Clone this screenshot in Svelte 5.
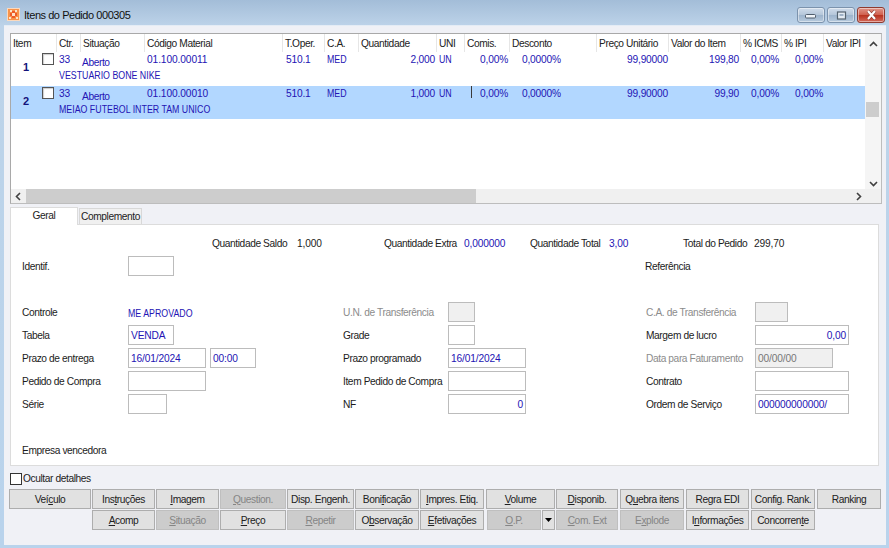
<script>
  const columns = [
    ['Item', 46], ['Ctr.', 24], ['Situação', 64], ['Código Material', 138], ['T.Oper.', 42],
    ['C.A.', 34], ['Quantidade', 78], ['UNI', 28], ['Comis.', 45], ['Desconto', 87],
    ['Preço Unitário', 72], ['Valor do Item', 72], ['% ICMS', 41], ['% IPI', 42], ['Valor IPI', 41]
  ];
  const rows = [
    { n: '1', qty: '2,000', total: '199,80', desc: 'VESTUARIO BONE NIKE', code: '01.100.00011', selected: false },
    { n: '2', qty: '1,000', total: '99,90', desc: 'MEIAO FUTEBOL INTER TAM UNICO', code: '01.100.00010', selected: true }
  ];
  const top = [
    ['', 'Veículo', 'c'], ['', 'Instruções', 't'], ['', 'Imagem', 'I'], ['off', 'Question.', 'Q'],
    ['', 'Disp. Engenh.', ''], ['', 'Bonificação', 'f'], ['wide', 'Impres. Etiq.', 'I'], ['', 'Volume', 'V'],
    ['wide', 'Disponib.', 'D'], ['wide', 'Quebra itens', 'u'], ['wide', 'Regra EDI', 'g'], ['wide', 'Config. Rank.', ''], ['', 'Ranking', '']
  ];
  const bottom = [
    ['', 'Acomp', 'A'], ['off', 'Situação', 'S'], ['', 'Preço', 'P'], ['off', 'Repetir', 'R'],
    ['', 'Observação', 'b'], ['wide', 'Efetivações', 'E']
  ];
  const bottomEnd = [
    ['off wide', 'Com. Ext', 'C'], ['off wide', 'Explode', 'x'], ['wide', 'Informações', 'n'], ['wide', 'Concorrente', 't']
  ];
  function parts(label, key) {
    if (!key) return [label, '', ''];
    const i = label.indexOf(key);
    return [label.slice(0, i), key, label.slice(i + 1)];
  }
</script>

{#snippet btn(b)}
  {@const p = parts(b[1], b[2])}
  <button class="btn {b[0]}">{p[0]}<u>{p[1]}</u>{p[2]}</button>
{/snippet}

<div class="win">
  <header class="title">
    <svg class="logo" width="13" height="13" viewBox="0 0 13 13">
      <rect width="13" height="13" fill="#fbd9bd" />
      <rect x="1" y="1" width="11" height="11" fill="#f8934a" />
      <path d="M3 2h2v2H3zM8 2h2v2H8zM5 5h3v3H5zM2 9h2v2H2zM9 9h2v2H9z" fill="#fde3cc" />
      <path d="M5 3h3v2H5zM3 5h2v3H3zM8 5h2v3H8zM5 8h3v2H5z" fill="#ec5a2a" />
    </svg>
    <span class="title-text">Itens do Pedido 000305</span>
    <div class="controls">
      <div class="ctl">
        <svg class="dash" width="12" height="6" viewBox="0 0 12 6"><rect x="0.5" y="0.5" width="10" height="3.5" rx="1" fill="#eef3f8" stroke="#4f5d6c" /></svg>
      </div>
      <div class="ctl">
        <svg width="11" height="9" viewBox="0 0 11 9"><rect x="1.5" y="1" width="8" height="7" fill="#e3ebf3" stroke="#55636f" stroke-width="1.2" /><rect x="3.5" y="3" width="4" height="2" fill="#9fb2c6" /></svg>
      </div>
      <div class="ctl close">
        <svg width="13" height="10" viewBox="0 0 13 10"><path d="M3 1l7 8M10 1l-7 8" stroke="#8a3a30" stroke-width="3.4" /><path d="M3 1l7 8M10 1l-7 8" stroke="#fff" stroke-width="2.2" /></svg>
      </div>
    </div>
  </header>

  <main class="client">
    <section class="grid">
      <div class="grid-main">
        <div class="grid-view">
          <div class="row head">
            {#each columns as c}
              <div class="hcell" style="width:{c[1]}px">{c[0]}</div>
            {/each}
          </div>
          {#each rows as r}
            <div class="record" class:selected={r.selected}>
              <div class="num">{r.n}</div>
              <div class="check box"></div>
              <div class="rec-body">
                <div class="rec-line">
                  <span class="c-ctr">33</span>
                  <span class="c-sit">Aberto</span>
                  <span class="c-code">{r.code}</span>
                  <span class="c-op">510.1</span>
                  <span class="c-ca"><b class="caps">MED</b></span>
                  <span class="c-qty">{r.qty}</span>
                  <span class="c-uni"><b class="caps">UN</b></span>
                  <span class="c-com">{#if r.selected}<i class="caret"></i>{/if}0,00%</span>
                  <span class="c-desc">0,0000%</span>
                  <span class="c-price">99,90000</span>
                  <span class="c-total">{r.total}</span>
                  <span class="c-icms">0,00%</span>
                  <span class="c-ipi">0,00%</span>
                </div>
                <div class="rec-desc"><b class="caps">{r.desc}</b></div>
              </div>
            </div>
          {/each}
        </div>
        <div class="vscroll">
          <svg class="arrow" width="9" height="6" viewBox="0 0 9 6"><path d="M1 5l3.5-3.5L8 5" fill="none" stroke="#404040" stroke-width="1.6" /></svg>
          <div class="vtrack"><div class="vthumb"></div></div>
          <svg class="arrow" width="9" height="6" viewBox="0 0 9 6"><path d="M1 1l3.5 3.5L8 1" fill="none" stroke="#404040" stroke-width="1.6" /></svg>
        </div>
      </div>
      <div class="hscroll">
        <svg width="6" height="9" viewBox="0 0 6 9"><path d="M5 1L1.5 4.5 5 8" fill="none" stroke="#404040" stroke-width="1.6" /></svg>
        <div class="htrack"><div class="hthumb"></div></div>
        <svg width="6" height="9" viewBox="0 0 6 9"><path d="M1 1l3.5 3.5L1 8" fill="none" stroke="#404040" stroke-width="1.6" /></svg>
      </div>
    </section>

    <section class="tabs">
      <div class="tab active">Geral</div>
      <div class="tab">Complemento</div>
    </section>

    <section class="panel">
      <div class="stats">
        <span>Quantidade Saldo</span><span class="num-text">1,000</span>
        <span>Quantidade Extra</span><span class="blue num-text">0,000000</span>
        <span>Quantidade Total</span><span class="blue num-text">3,00</span>
        <span>Total do Pedido</span><span class="num-text">299,70</span>
      </div>
      <div class="form">
        <span>Identif.</span><div class="in w46"></div><span></span><span></span><span class="ref">Referência</span><span></span>
        <span class="full"></span>
        <span>Controle</span><span class="blue"><b class="caps">ME APROVADO</b></span><span class="dim">U.N. de Transferência</span><div class="in w27 gray"></div><span class="dim">C.A. de Transferência</span><div class="in w33 gray"></div>
        <span>Tabela</span><div class="in w46 blue num-text">VENDA</div><span>Grade</span><div class="in w27"></div><span>Margem de lucro</span><div class="in w94 blue num-text right">0,00</div>
        <span>Prazo de entrega</span><div class="pair"><div class="in w78 blue num-text">16/01/2024</div><div class="in w46 blue num-text">00:00</div></div><span>Prazo programado</span><div class="in w78 blue num-text">16/01/2024</div><span class="dim">Data para Faturamento</span><div class="in w78 gray muted num-text">00/00/00</div>
        <span>Pedido de Compra</span><div class="in w78"></div><span>Item Pedido de Compra</span><div class="in w78"></div><span>Contrato</span><div class="in w94"></div>
        <span>Série</span><div class="in w39"></div><span>NF</span><div class="in w78 blue num-text right">0</div><span>Ordem de Serviço</span><div class="in w94 blue num-text">000000000000/</div>
        <span class="full"></span>
        <span class="full">Empresa vencedora</span>
      </div>
    </section>

    <label class="hide"><span class="box small"></span>Ocultar detalhes</label>

    <section class="buttons">
      {#each top as b}
        {@render btn(b)}
      {/each}
      <span></span>
      {#each bottom as b}
        {@render btn(b)}
      {/each}
      <div class="split">
        <button class="btn off grow"><u>O</u>.P.</button>
        <button class="btn drop" aria-label="Mais"><svg width="7" height="4" viewBox="0 0 7 4"><path d="M0 0h7L3.5 4z" fill="#000" /></svg></button>
      </div>
      {#each bottomEnd as b}
        {@render btn(b)}
      {/each}
    </section>
  </main>
</div>

<style>
  :global(body) { margin: 0; }
  .win {
    width: 889px; height: 548px; box-sizing: border-box; overflow: hidden;
    display: flex; flex-direction: column;
    background: linear-gradient(#a3bdd8 0, #bdd3e9 26px, #b9d3ec 100%);
    font: 10.2px/13px "Liberation Sans", Arial, sans-serif; letter-spacing: -0.4px; color: #1c1c1c;
  }
  .title { height: 25px; flex: none; display: flex; align-items: center; padding: 0 4px 0 7px; }
  .logo { margin-top: 4px; }
  .title-text { margin: 6px 0 0 4px; font-size: 11px; letter-spacing: -0.45px; color: #101010; }
  .controls { margin-left: auto; display: flex; gap: 2px; align-self: flex-start; margin-top: 7px; }
  .ctl {
    width: 26px; height: 14px; border: 1px solid #7c93ad; border-radius: 3px;
    display: flex; align-items: center; justify-content: center;
    background: linear-gradient(#d0dceb, #b5c7da 48%, #9db4cc 52%, #b7cade);
    box-shadow: inset 0 0 0 1px rgba(255,255,255,.45);
  }
  .dash { margin-top: 4px; }
  .close { border-color: #8f3b30; background: linear-gradient(#e0968a, #d0614f 48%, #b8321f 52%, #d4695a); }
  .client {
    flex: 1; margin: 0 3px 3px 4px; background: #f0f1f6; padding: 7px 4px 0 6px;
    display: flex; flex-direction: column; align-items: flex-start;
    border-top: 1px solid #e4ecf5;
  }

  .grid {
    width: 872px; height: 171px; box-sizing: border-box; flex: none;
    border: 1px solid #a9a9a9; border-bottom-color: #bdbdbd; border-right-color: #bdbdbd;
    background: #fff; display: flex; flex-direction: column;
  }
  .grid-main { flex: 1; display: flex; min-height: 0; }
  .grid-view { flex: 1; min-width: 0; }
  .vscroll { width: 16px; flex: none; display: flex; flex-direction: column; align-items: center; background: #f5f5f5; padding: 7px 0 2px; }
  .vtrack { flex: 1; width: 100%; }
  .vthumb { width: 13px; height: 15px; margin: 55px 0 0 1px; background: #cdcdcd; }
  .arrow { flex: none; }
  .hscroll { height: 14px; flex: none; display: flex; align-items: center; background: #f0f0f0; padding: 0 19px 0 4px; }
  .htrack { flex: 1; margin: 0 5px 0 5px; height: 100%; }
  .hthumb { width: 450px; height: 100%; background: #cdcdcd; }
  .row.head { display: flex; height: 18px; }
  .hcell { box-sizing: border-box; height: 18px; line-height: 20px; padding-left: 2px; border-right: 1px solid #e6e6e6; white-space: nowrap; overflow: hidden; color: #222; }
  .hcell:last-child { border-right: 0; }

  .record { height: 34px; display: flex; color: #2414b4; }
  .record + .record { height: 33px; }
  .selected { background: #b2d7ff; }
  .num { width: 31px; flex: none; box-sizing: border-box; padding: 9px 0 0 12px; font-weight: 700; color: #13137a; font-size: 11px; letter-spacing: 0; }
  .check { margin: 1px 0 0 0; flex: none; }
  .box { box-sizing: border-box; width: 12px; height: 12px; border: 1px solid #555; background: #fff; box-shadow: inset 1px 1px 1px #ccc; display: block; }
  .rec-body { margin-left: 5px; flex: 1; min-width: 0; }
  .rec-line { display: grid; height: 16px; grid-template-columns: 23px 65px 139px 41px 34px 74px 28px 45px 87px 73px 71px 40px 44px; letter-spacing: -0.2px; }
  .rec-line span { line-height: 13px; padding-top: 1px; white-space: nowrap; }
  .c-code { letter-spacing: -0.1px; }
  .rec-line .c-sit { position: relative; top: 3px; letter-spacing: -0.4px; }
  .caps { display: inline-block; font-weight: 400; font-size: 10.5px; letter-spacing: 0; transform: scaleX(.84); transform-origin: left center; }
  .num-text { letter-spacing: -0.15px; }
  .c-qty, .c-price, .c-total, .c-com, .c-icms, .c-ipi { text-align: right; }
  .c-uni { padding-left: 4px; }
  .c-desc { padding-left: 14px; }
  .c-com { position: relative; }
  .caret { position: absolute; left: 8px; top: 0; width: 1px; height: 12px; background: #3a3a3a; }
  .rec-desc { line-height: 13px; padding-top: 1px; white-space: nowrap; }

  .tabs { display: flex; align-items: flex-end; height: 18px; flex: none; margin-top: 2px; position: relative; z-index: 1; }
  .tab { box-sizing: border-box; height: 16px; width: 63px; margin-left: 1px; line-height: 15px; text-align: center; background: #f0f0f0; border: 1px solid #d8d8d8; border-bottom: 0; color: #222; }
  .tab.active { height: 18px; width: 68px; margin-left: 0; background: #fff; margin-bottom: -1px; line-height: 15px; border-color: #dcdcdc; }

  .panel { width: 869px; height: 242px; box-sizing: border-box; flex: none; border: 1px solid #dcdcdc; background: #fff; padding: 8px 0 0 11px; }
  .stats { margin-left: 190px; display: grid; grid-template-columns: 85px 87px 80px 66px 79px 74px 71px auto; height: 20px; line-height: 22px; white-space: nowrap; }
  .form {
    margin-top: 3px; display: grid;
    grid-template-columns: 106px 215px 105px 198px 109px 1fr;
    grid-auto-rows: 20px; row-gap: 3px; align-items: center; white-space: nowrap;
  }
  .form > span { padding-top: 2px; line-height: 18px; }
  .full { grid-column: 1 / -1; }
  .ref { margin-left: -1px; }
  .dim { color: #8c8c8c; }
  .blue { color: #2414b4; }
  .in { box-sizing: border-box; height: 20px; border: 1px solid #bcbcbc; background: #fff; padding: 0 2px; line-height: 19px; white-space: nowrap; }
  .in.right { text-align: right; }
  .in.gray { background: #f0f0f0; }
  .muted { color: #777; }
  .w27 { width: 27px; } .w33 { width: 33px; } .w39 { width: 39px; } .w46 { width: 46px; } .w78 { width: 78px; } .w94 { width: 94px; }
  .pair { display: flex; gap: 4px; }

  .hide { display: flex; align-items: center; gap: 1px; height: 13px; margin: 6px 0 4px 0; color: #222; }
  .small { border-color: #333; box-shadow: none; }

  .buttons {
    display: grid; margin-left: -1px;
    grid-template-columns: 83px 64px 64px 67px 68px 65px 66px 70px 64px 66px 65px 66px 65px;
    grid-auto-rows: 21px;
  }
  .btn {
    appearance: none; width: calc(100% - 1px); height: 20px; margin: 0; padding: 0;
    border: 1px solid #adadad; background: #e1e1e1; color: #222;
    font: inherit; letter-spacing: inherit; text-align: center; white-space: nowrap; overflow: hidden;
  }
  .btn.wide { width: calc(100% - 2px); }
  .btn.off { background: #ccc; border-color: #bfbfbf; color: #858585; }
  .split { display: flex; gap: 1px; width: calc(100% - 1px); }
  .split .grow { flex: 1; width: auto; margin-left: 1px; }
  .drop { width: 13px; flex: none; display: flex; align-items: center; justify-content: center; }
</style>
